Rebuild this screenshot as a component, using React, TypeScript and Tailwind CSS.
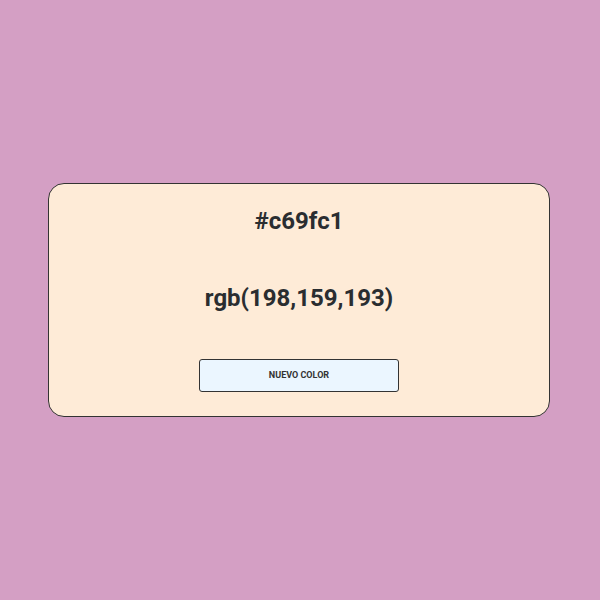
export default function App() {
  return (
    <div className="w-[600px] h-[600px] bg-[#d49fc4] flex items-center justify-center pr-[2px]" style={{ fontFamily: "Roboto, 'Liberation Sans', sans-serif" }}>
      <div className="w-[502px] h-[234px] bg-[#feebd7] border border-[#333] rounded-[16px] flex flex-col items-center pt-[23px]">
        <h2 className="text-[24px] leading-[28px] font-bold text-[#2a2d30]">#c69fc1</h2>
        <h2 className="mt-[49px] text-[24px] leading-[28px] font-bold text-[#2a2d30]">rgb(198,159,193)</h2>
        <button className="mt-[47px] w-[200px] h-[33px] bg-[#ebf6ff] border border-[#333] rounded-[3px] pt-[1px] text-[9px] font-bold text-[#333] uppercase">Nuevo color</button>
      </div>
    </div>
  );
}
